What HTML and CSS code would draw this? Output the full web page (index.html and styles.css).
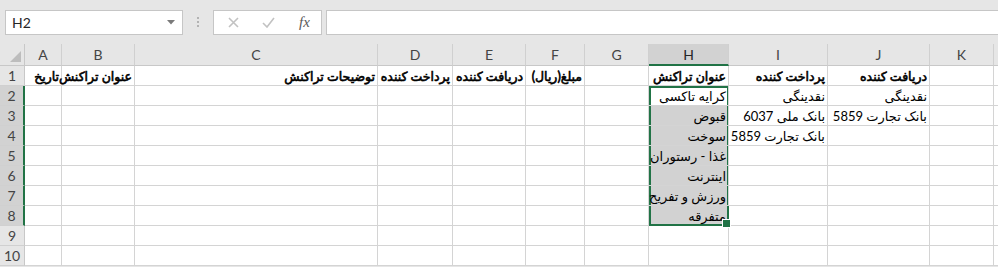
FILE: index.html
```html
<!DOCTYPE html>
<html lang="fa">
<head>
  <meta charset="UTF-8" />
  <title>Book1 - Excel</title>
  <link rel="stylesheet" href="styles.css">
</head>
<body>
  <div class="toolbar">
    <div class="namebox">
      <span>H2</span>
      <svg class="caret" width="8" height="5" viewBox="0 0 8 5"><path d="M0 0h8L4 4.5z" /></svg>
    </div>
    <div class="grip"><i></i><i></i><i></i></div>
    <div class="fxbox">
      <svg class="tool x" width="11" height="11" viewBox="0 0 11 11"><path d="M1 1l9 9M10 1l-9 9" /></svg>
      <svg class="tool ok" width="13" height="11" viewBox="0 0 13 11"><path d="M1 6l4 4 7-9" /></svg>
      <span class="fx">fx</span>
    </div>
    <div class="formula"></div>
  </div>

  <div class="sheet">
    <div class="corner"><svg width="11" height="11" viewBox="0 0 11 11"><path d="M11 0v11H0z" /></svg></div>
    <div class="ch">A</div><div class="ch">B</div><div class="ch">C</div><div class="ch">D</div><div class="ch">E</div><div class="ch">F</div><div class="ch">G</div><div class="ch on">H</div><div class="ch">I</div><div class="ch">J</div><div class="ch">K</div><div class="ch end"></div>

    <div class="rh">1</div><div class="c b">تاریخ</div><div class="c b">عنوان تراکنش</div><div class="c b">توضیحات تراکنش</div><div class="c b">پرداخت کننده</div><div class="c b">دریافت کننده</div><div class="c b">مبلغ(ریال)</div><div class="c"></div><div class="c b">عنوان تراکنش</div><div class="c b">پرداخت کننده</div><div class="c b">دریافت کننده</div><div class="c"></div><div class="c"></div>
    <div class="rh on">2</div><div class="c"></div><div class="c"></div><div class="c"></div><div class="c"></div><div class="c"></div><div class="c"></div><div class="c"></div><div class="c sel first">کرایه تاکسی</div><div class="c">نقدینگی</div><div class="c">نقدینگی</div><div class="c"></div><div class="c"></div>
    <div class="rh on">3</div><div class="c"></div><div class="c"></div><div class="c"></div><div class="c"></div><div class="c"></div><div class="c"></div><div class="c"></div><div class="c sel">قبوض</div><div class="c">بانک ملی 6037</div><div class="c">بانک تجارت 5859</div><div class="c"></div><div class="c"></div>
    <div class="rh on">4</div><div class="c"></div><div class="c"></div><div class="c"></div><div class="c"></div><div class="c"></div><div class="c"></div><div class="c"></div><div class="c sel">سوخت</div><div class="c">بانک تجارت 5859</div><div class="c"></div><div class="c"></div><div class="c"></div>
    <div class="rh on">5</div><div class="c"></div><div class="c"></div><div class="c"></div><div class="c"></div><div class="c"></div><div class="c"></div><div class="c"></div><div class="c sel">غذا - رستوران</div><div class="c"></div><div class="c"></div><div class="c"></div><div class="c"></div>
    <div class="rh on">6</div><div class="c"></div><div class="c"></div><div class="c"></div><div class="c"></div><div class="c"></div><div class="c"></div><div class="c"></div><div class="c sel">اینترنت</div><div class="c"></div><div class="c"></div><div class="c"></div><div class="c"></div>
    <div class="rh on">7</div><div class="c"></div><div class="c"></div><div class="c"></div><div class="c"></div><div class="c"></div><div class="c"></div><div class="c"></div><div class="c sel">ورزش و تفریح</div><div class="c"></div><div class="c"></div><div class="c"></div><div class="c"></div>
    <div class="rh on">8</div><div class="c"></div><div class="c"></div><div class="c"></div><div class="c"></div><div class="c"></div><div class="c"></div><div class="c"></div><div class="c sel last">متفرقه</div><div class="c"></div><div class="c"></div><div class="c"></div><div class="c"></div>
    <div class="rh">9</div><div class="c"></div><div class="c"></div><div class="c"></div><div class="c"></div><div class="c"></div><div class="c"></div><div class="c"></div><div class="c"></div><div class="c"></div><div class="c"></div><div class="c"></div><div class="c"></div>
    <div class="rh">10</div><div class="c"></div><div class="c"></div><div class="c"></div><div class="c"></div><div class="c"></div><div class="c"></div><div class="c"></div><div class="c"></div><div class="c"></div><div class="c"></div><div class="c"></div><div class="c"></div>
  </div>
</body>
</html>
```

FILE: styles.css
```css
* {
  box-sizing: border-box;
}
body {
  margin: 0;
  background-color: #e6e6e6;
  font-family: Lato, "DejaVu Sans", sans-serif;
  overflow: hidden;
}

/* formula bar */
.toolbar {
  display: flex;
  align-items: flex-start;
  height: 44px;
  padding: 10px 0 0 5px;
}
.namebox {
  width: 178px;
  height: 25px;
  background: #fff;
  border: 1px solid #c6c6c6;
  display: flex;
  align-items: center;
  justify-content: space-between;
  padding: 0 7px 0 6px;
  font-size: 14px;
  color: #262626;
}
.caret path {
  fill: #7a7a7a;
}
.grip {
  width: 30px;
  display: flex;
  flex-direction: column;
  align-items: center;
  gap: 2px;
  padding-top: 7px;
}
.grip i {
  width: 2px;
  height: 2px;
  background: #b3b3b3;
}
.fxbox {
  width: 109px;
  height: 25px;
  background: #fff;
  border: 1px solid #c6c6c6;
  display: flex;
  align-items: center;
  padding-left: 14px;
}
.tool path {
  fill: none;
  stroke: #c2c2c2;
  stroke-width: 1.6;
}
.ok {
  margin-left: 23px;
}
.fx {
  margin-left: 24px;
  font-family: "Liberation Serif", serif;
  font-style: italic;
  font-size: 15px;
  color: #5a5a5a;
}
.formula {
  flex: 1;
  height: 25px;
  margin-left: 4px;
  background: #fff;
  border: 1px solid #c6c6c6;
  border-right: none;
}

/* grid */
.sheet {
  display: grid;
  grid-template-columns: 25px 37px 73px 243px 75px 73px 59px 64px 80px 99px 102px 64px 1fr;
  grid-template-rows: 22px repeat(10, 20px);
  background: #fff;
  font-size: 13px;
}
.corner {
  background: #e6e6e6;
  border-right: 1px solid #c8c8c8;
  border-bottom: 1px solid #c8c8c8;
  display: flex;
  align-items: flex-end;
  justify-content: flex-end;
  padding: 0 3px 3px 0;
}
.corner path {
  fill: #bdbdbd;
}
.ch {
  background: #e6e6e6;
  border-right: 1px solid #d0d0d0;
  border-bottom: 1px solid #c8c8c8;
  text-align: center;
  line-height: 21px;
  font-size: 14px;
  color: #444;
}
.ch.on {
  background: #d2d2d2;
  border-bottom: 2px solid #217346;
  color: #262626;
}
.ch.end {
  border-right: none;
}
.rh {
  background: #e6e6e6;
  border-right: 1px solid #c8c8c8;
  border-bottom: 1px solid #d0d0d0;
  text-align: center;
  line-height: 19px;
  font-size: 14px;
  color: #444;
}
.rh.on {
  background: #d2d2d2;
  border-right: 2px solid #217346;
}
.c {
  border-right: 1px solid #d4d4d4;
  border-bottom: 1px solid #d4d4d4;
  direction: rtl;
  text-align: right;
  padding: 1px 2px 0;
  line-height: 19px;
  white-space: nowrap;
  color: #000;
}
/* faux bold: keeps the narrow regular advance widths */
.b {
  font-size: 12.5px;
  -webkit-text-stroke: 0.6px #000;
}
.sel {
  background: #d2d2d2;
  box-shadow: inset 2px 0 #217346, inset -1px 0 #217346;
}
.sel.first {
  background: #fff;
  box-shadow: inset 2px 0 #217346, inset -1px 0 #217346, inset 0 2px #217346;
}
.sel.last {
  position: relative;
  box-shadow: inset 2px 0 #217346, inset -1px 0 #217346, inset 0 -1px #217346;
  border-right-color: #217346;
  border-bottom-color: #217346;
}
.sel.last::after {
  content: "";
  position: absolute;
  right: -3px;
  bottom: -3px;
  width: 7px;
  height: 7px;
  background: #217346;
  border: 1px solid #fff;
  z-index: 1;
}
```
